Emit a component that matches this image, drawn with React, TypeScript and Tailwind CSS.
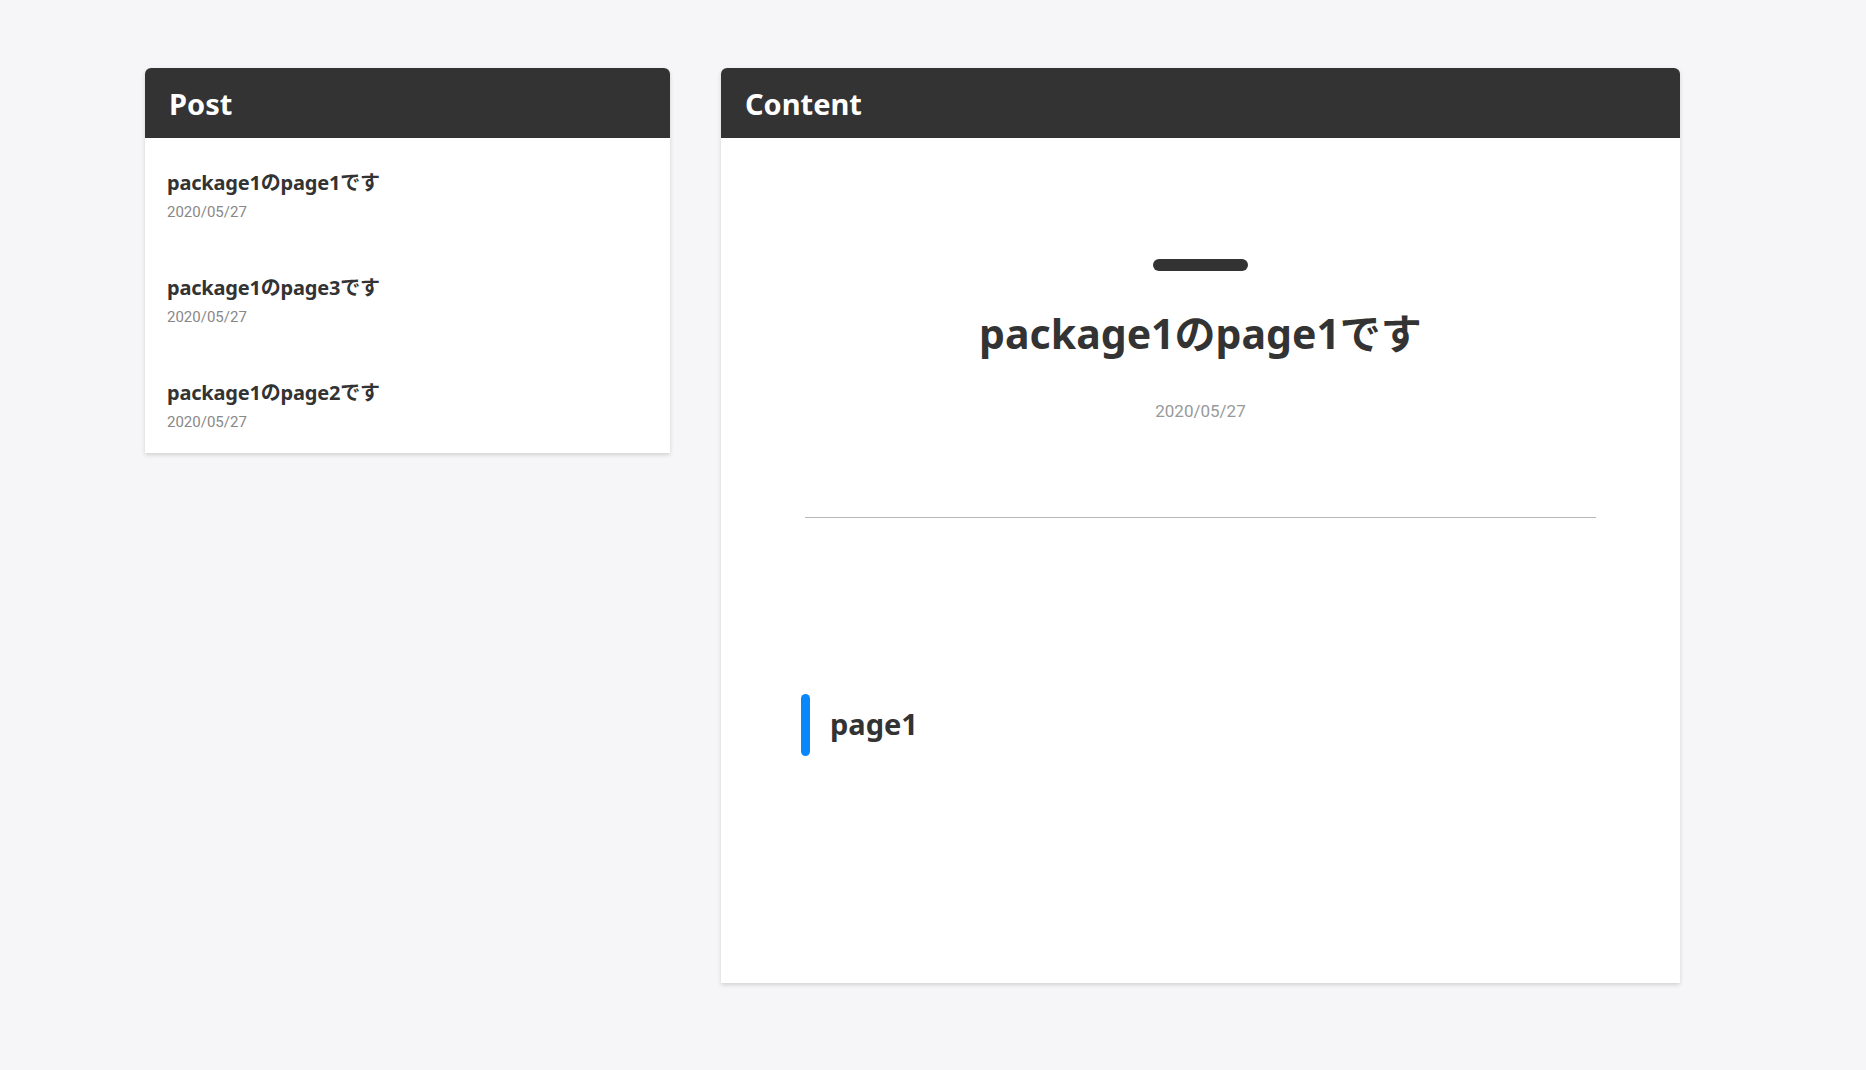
import React from 'react';

const posts = [
  { title: 'package1のpage1です', date: '2020/05/27' },
  { title: 'package1のpage3です', date: '2020/05/27' },
  { title: 'package1のpage2です', date: '2020/05/27' },
];

const jp = "font-['Noto_Sans','Noto_Sans_CJK_JP',sans-serif]";

function CardHeader({ title }: { title: string }) {
  return (
    <div className="h-[70px] bg-[#333333] rounded-t-[6px] flex items-center px-[24px]">
      <h2 className={`${jp} text-white text-[29px] font-bold leading-none`}>{title}</h2>
    </div>
  );
}

export default function App() {
  return (
    <div className={`min-h-screen bg-[#f6f6f8] ${jp}`}>
      <div className="flex items-start gap-[51px] pl-[145px] pt-[68px]">
        {/* Post list */}
        <section className="w-[525px] bg-white rounded-t-[6px] shadow-[0_2px_4px_rgba(0,0,0,0.15)]">
          <CardHeader title="Post" />
          <ul className="px-[22px] pt-[32px] pb-[21px] flex flex-col gap-[53px]">
            {posts.map((p) => (
              <li key={p.title} className="flex flex-col gap-[6px]">
                <span className="text-[20px] font-bold text-[#333] leading-[26px] tracking-[-0.2px]">{p.title}</span>
                <span className="text-[15px] text-[#888] leading-[20px] font-['Roboto',sans-serif]">{p.date}</span>
              </li>
            ))}
          </ul>
        </section>

        {/* Content */}
        <section className="w-[959px] h-[915px] bg-white rounded-t-[6px] shadow-[0_2px_4px_rgba(0,0,0,0.15)] flex flex-col">
          <CardHeader title="Content" />
          <div className="px-[84px] flex flex-col">
            <div className="flex flex-col items-center pt-[121px]">
              <div className="w-[95px] h-[12px] rounded-full bg-[#333]" />
              <h1 className="mt-[36px] text-[41px] font-bold text-[#333] leading-[52px]">package1のpage1です</h1>
              <p className="mt-[42px] text-[17px] text-[#999] leading-[20px] font-['Roboto',sans-serif]">2020/05/27</p>
            </div>
            <hr className="mt-[96px] border-0 h-[1px] bg-[#b8b8b8]" />
            <div className="mt-[176px] flex items-center gap-[20px] -ml-[4px]">
              <div className="w-[9px] h-[62px] rounded-full bg-[#0a87f8]" />
              <h3 className="text-[29px] font-bold text-[#333] leading-none -mt-[3px]">page1</h3>
            </div>
          </div>
        </section>
      </div>
    </div>
  );
}
